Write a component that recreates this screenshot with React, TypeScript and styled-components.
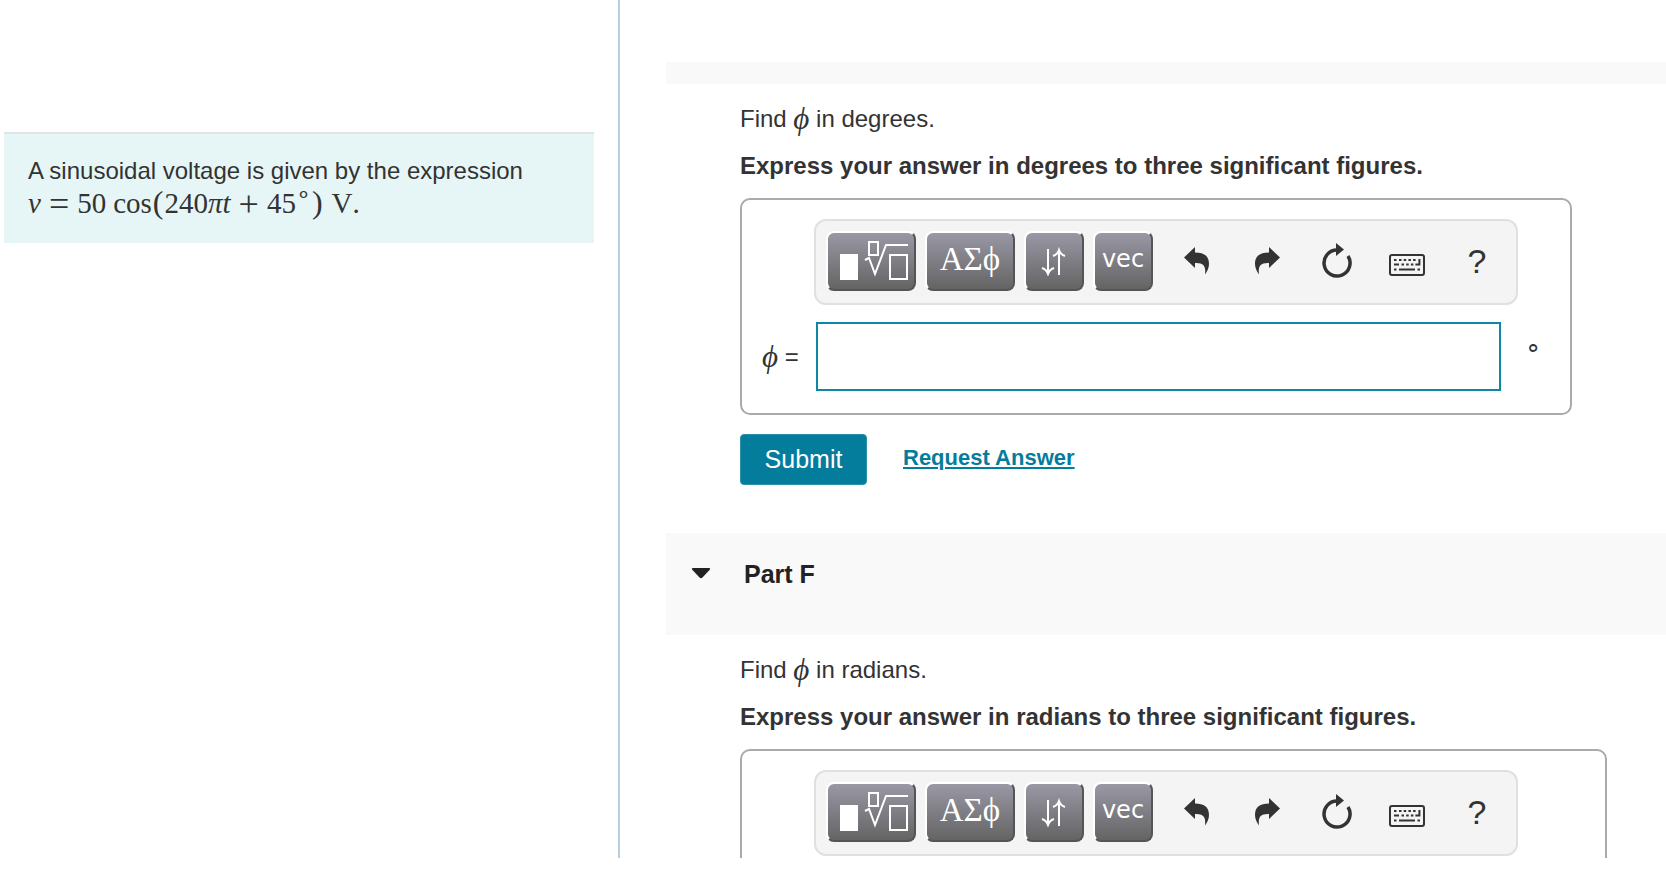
import React, { useId } from "react";
import styled, { createGlobalStyle } from "styled-components";

const sans = `"Liberation Sans", Arial, sans-serif`;
const serif = `"Liberation Serif", "Times New Roman", serif`;

const GlobalStyle = createGlobalStyle`
  * { box-sizing: border-box; }
  body { margin: 0; background: #fff; color: #333; font-family: ${sans}; font-size: 24px; }
  p, h2 { margin: 0; }
  button { font: inherit; cursor: pointer; }
`;

const Page = styled.div`
  display: flex;
  height: calc(100vh - 12px);
  overflow: hidden;
`;

const ProblemPane = styled.aside`
  flex: 0 0 620px;
  padding: 132px 24px 0 4px;
  border-right: 2px solid #b9cde1;
`;

const ProblemCard = styled.section`
  padding: 20px 24px 23px;
  border-top: 2px solid #dfe5e5;
  background: #e6f6f6;
  line-height: 33px;
`;

const Formula = styled.p`
  font-family: ${serif};
  font-size: 29px;
  font-kerning: none;
  white-space: nowrap;
`;

const Operator = styled.span`
  margin: 0 8px;
  font-size: 36px;
  line-height: 0;
  vertical-align: -3px;
`;

const Paren = styled.span`
  margin: 0 1px;
  font-size: 32px;
  line-height: 0;
`;

const FunctionName = styled.span`
  margin-left: 7px;
`;

const UnitName = styled.span`
  margin-left: 8px;
`;

const Sup = styled.sup`
  font-size: 24px;
  line-height: 0;
`;

const Phi = styled.i`
  font-family: ${serif};
  font-size: 31px;
  line-height: 0;
  vertical-align: -2px;
`;

const PartsPane = styled.main`
  flex: 1;
  min-width: 0;
  padding: 62px 0 0 46px;
`;

const PartHeader = styled.header<{ $short?: boolean }>`
  display: flex;
  align-items: flex-start;
  height: ${(p) => (p.$short ? 22 : 102)}px;
  padding: ${(p) => (p.$short ? 0 : "27px 25px 0")};
  background: #f9f9f9;
`;

const Toggle = styled.button`
  display: flex;
  align-items: center;
  gap: 33px;
  padding: 0;
  border: 0;
  background: none;
  color: #222;
  font-size: 25px;
  font-weight: 700;
  line-height: 28px;
`;

const PartBody = styled.section`
  padding: 20px 24px 48px 74px;
`;

const Prompt = styled.p`
  line-height: 30px;
`;

const Instruction = styled.p`
  margin-top: 17px;
  font-weight: 700;
  line-height: 30px;
`;

const AnswerBox = styled.div<{ $wide?: boolean }>`
  width: ${(p) => (p.$wide ? 867 : 832)}px;
  max-width: 100%;
  margin-top: 17px;
  padding: 19px 48px 22px 18px;
  border: 2px solid #aaa;
  border-radius: 10px;
`;

const Toolbar = styled.div`
  display: flex;
  align-items: center;
  width: 704px;
  height: 86px;
  margin-left: 54px;
  padding: 0 0 2px 10px;
  border: 2px solid #e0e0e0;
  border-radius: 12px;
  background: #f4f4f4;
`;

const KeyGroup = styled.div`
  display: flex;
  flex: none;
  gap: 9px;
  margin-right: 9px;
`;

const Key = styled.button<{ $wide?: boolean }>`
  display: flex;
  align-items: center;
  justify-content: center;
  width: ${(p) => (p.$wide ? 90 : 60)}px;
  height: 60px;
  padding: 0;
  border: 2px solid;
  border-color: #fff #555 #555 #fff;
  border-radius: 8px;
  background: linear-gradient(#9a98a5, #646464);
  color: #fff;
`;

const GreekLabel = styled.span`
  padding-bottom: 4px;
  font-family: ${serif};
  font-size: 33px;
  line-height: 36px;
`;

const VecLabel = styled.span`
  padding-bottom: 4px;
  font-family: "DejaVu Sans", Verdana, sans-serif;
  font-size: 24px;
  line-height: 28px;
`;

const Tool = styled.button`
  display: flex;
  flex: none;
  align-items: center;
  justify-content: center;
  width: 70px;
  height: 60px;
  padding: 0;
  border: 0;
  background: none;
  color: #333;
  font-size: 34px;
`;

const InputRow = styled.div`
  display: flex;
  align-items: center;
  margin-top: 17px;
`;

const InputLabel = styled.label`
  flex: 0 0 56px;
  padding-left: 2px;
  line-height: 30px;
`;

const AnswerInput = styled.input`
  flex: 0 0 685px;
  height: 69px;
  padding: 0 12px;
  border: 2px solid #0f86a3;
  font: inherit;
  outline: 0;
`;

const Unit = styled.span`
  margin-left: 24px;
  padding-bottom: 18px;
  font-family: ${serif};
  font-size: 26px;
  line-height: 30px;
`;

const Actions = styled.div`
  display: flex;
  align-items: center;
  gap: 36px;
  margin-top: 19px;
`;

const Submit = styled.button`
  width: 127px;
  height: 51px;
  padding: 0;
  border: 1px solid #2a90ab;
  border-radius: 4px;
  background: #047c9c;
  color: #fff;
  font-size: 25px;
`;

const RequestLink = styled.a`
  padding-bottom: 4px;
  color: #047c9c;
  font-size: 22px;
  font-weight: 700;
  line-height: 28px;
`;

const TemplateIcon = () => (
  <svg width="74" height="44" viewBox="0 0 74 44" fill="none" stroke="#fff" strokeWidth="2">
    <path d="M6 15h18v26H6z" fill="#fff" stroke="none" />
    <path d="M35 3h9v13h-9zM56 16h17v24H56z" />
    <path d="M31 21l4-2 6 16 11-29h22" />
  </svg>
);

const ArrowsIcon = () => (
  <svg width="26" height="30" viewBox="0 0 26 30" fill="none" stroke="#fff" strokeWidth="2">
    <path d="M7 3v25M1 22c3 1 5 3 6 6 1-3 3-5 6-6M18 29V4M12 10c3-1 5-3 6-6 1 3 3 5 6 6" />
  </svg>
);

const UndoIcon = ({ flip }: { flip?: boolean }) => (
  <svg width="26" height="30" viewBox="0 0 26 30" fill="currentColor">
    <path
      transform={flip ? "translate(26 0) scale(-1 1)" : undefined}
      d="M0 11.500L11 1v5.500C20 6.500 25 10 25 18c0 4-2 8-4 10.500 1-8-1-12-10-11.500v5z"
    />
  </svg>
);

const ResetIcon = () => (
  <svg width="32" height="36" viewBox="0 0 32 36">
    <path d="M16 7A13 13 0 1 0 27 13" fill="none" stroke="currentColor" strokeWidth="3.500" />
    <path d="M15 0l8 6.500-8 6.500z" fill="currentColor" />
  </svg>
);

const KeyboardIcon = () => (
  <svg width="36" height="28" viewBox="0 -7 36 28" fill="none" stroke="currentColor" strokeWidth="2" overflow="visible">
    <rect x="1" y="1" width="34" height="20" rx="2" />
    <path d="M5 6h2.500m2.500 0h2.500m2.200 0h2.500m2.200 0h2.500m2.200 0h2.500M5 10.500h5m2.500 0h2.500m2.200 0h2.500m2.200 0h2.500m2 0h4V5M5 15.500h2.500m2.500 0h16m2.500 0h2.500" />
  </svg>
);

const Caret = () => (
  <svg width="20" height="12" viewBox="0 0 20 12" fill="currentColor">
    <path d="M2 0h16q2 0 .5 2L11.500 9.500q-1.500 1.500-3 0L1.500 2Q0 0 2 0z" />
  </svg>
);

function EquationToolbar() {
  return (
    <Toolbar role="toolbar" aria-label="Equation tools">
      <KeyGroup>
        <Key $wide aria-label="Templates"><TemplateIcon /></Key>
        <Key $wide aria-label="Symbols"><GreekLabel>ΑΣϕ</GreekLabel></Key>
        <Key aria-label="Subscript and superscript"><ArrowsIcon /></Key>
        <Key><VecLabel>vec</VecLabel></Key>
      </KeyGroup>
      <Tool aria-label="Undo"><UndoIcon /></Tool>
      <Tool aria-label="Redo"><UndoIcon flip /></Tool>
      <Tool aria-label="Reset"><ResetIcon /></Tool>
      <Tool aria-label="Keyboard shortcuts"><KeyboardIcon /></Tool>
      <Tool aria-label="Help">?</Tool>
    </Toolbar>
  );
}

function Question({ measure }: { measure: string }) {
  return (
    <>
      <Prompt>Find <Phi>ϕ</Phi> in {measure}.</Prompt>
      <Instruction>Express your answer in {measure} to three significant figures.</Instruction>
    </>
  );
}

export default function App() {
  const answerId = useId();
  return (
    <Page>
      <GlobalStyle />
      <ProblemPane>
        <ProblemCard>
          <p>A sinusoidal voltage is given by the expression</p>
          <Formula>
            <i>v</i><Operator>=</Operator>50<FunctionName>cos</FunctionName><Paren>(</Paren>240<i>πt</i>
            <Operator>+</Operator>45<Sup>∘</Sup><Paren>)</Paren><UnitName>V.</UnitName>
          </Formula>
        </ProblemCard>
      </ProblemPane>
      <PartsPane>
        <PartHeader $short />
        <PartBody>
          <Question measure="degrees" />
          <AnswerBox>
            <EquationToolbar />
            <InputRow>
              <InputLabel htmlFor={answerId}><Phi>ϕ</Phi> =</InputLabel>
              <AnswerInput id={answerId} type="text" />
              <Unit>∘</Unit>
            </InputRow>
          </AnswerBox>
          <Actions>
            <Submit type="button">Submit</Submit>
            <RequestLink href="#answer">Request Answer</RequestLink>
          </Actions>
        </PartBody>
        <PartHeader>
          <Toggle type="button" aria-expanded="true"><Caret />Part F</Toggle>
        </PartHeader>
        <PartBody>
          <Question measure="radians" />
          <AnswerBox $wide>
            <EquationToolbar />
          </AnswerBox>
        </PartBody>
      </PartsPane>
    </Page>
  );
}
